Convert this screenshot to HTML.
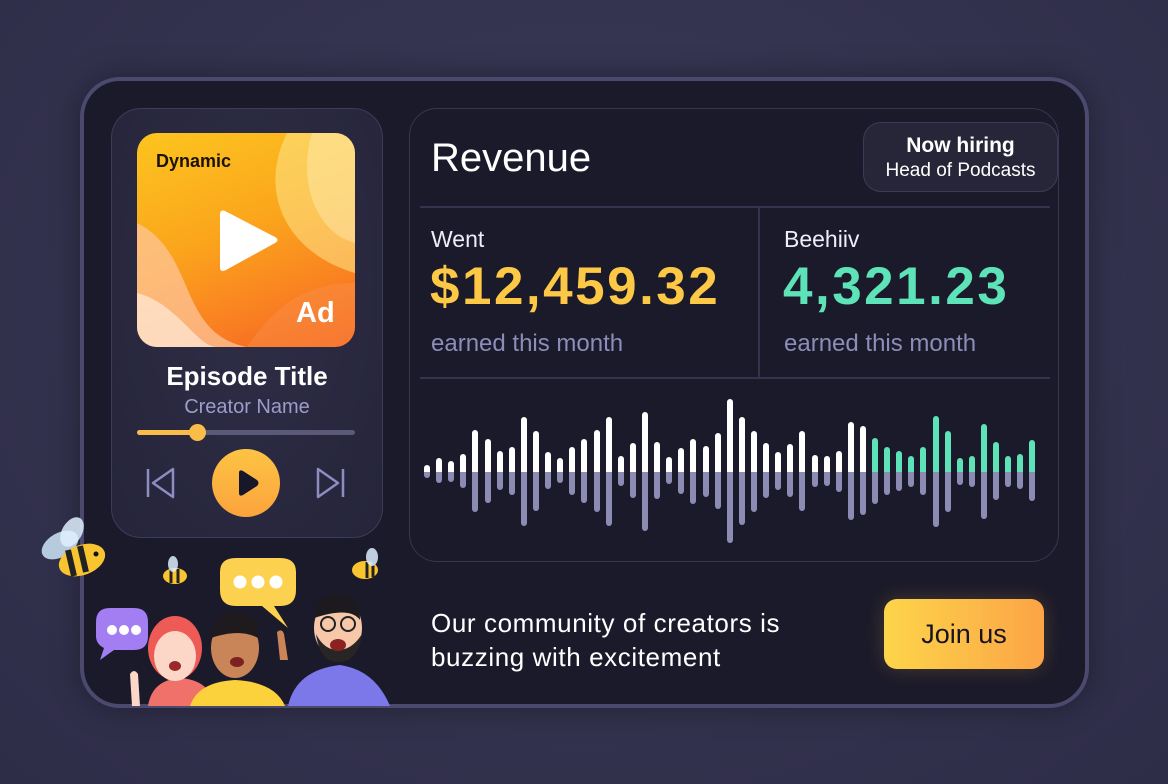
<!DOCTYPE html>
<html><head><meta charset="utf-8"><style>
*{margin:0;padding:0;box-sizing:border-box}
body{width:1168px;height:784px;overflow:hidden;background:radial-gradient(ellipse at 50% 40%,#3b3a58 0%,#33324e 60%,#2e2d48 100%);font-family:"Liberation Sans",sans-serif;position:relative}
.abs{position:absolute}
.outer{left:80px;top:77px;width:1009px;height:631px;border-radius:40px;background:#1b1a2a;border:4px solid #4b4a6e;box-shadow:0 0 30px rgba(0,0,0,.35)}
.player{left:111px;top:108px;width:272px;height:430px;border-radius:30px;background:radial-gradient(ellipse at 50% 40%,#2f2e47,#25243a);border:1.5px solid #3d3c58}
.art{left:137px;top:133px;width:218px;height:214px;border-radius:20px;overflow:hidden;background:linear-gradient(160deg,#fcc51f 0%,#fba51c 45%,#f97b22 80%,#f55a1d 100%)}
.panel{left:409px;top:108px;width:650px;height:454px;border-radius:28px;border:1.5px solid #37364f;background:#1b1a2b}
.pill{left:863px;top:122px;width:195px;height:70px;border-radius:18px;background:#272639;border:1.5px solid #3c3b55;color:#fff;text-align:center}
.t{color:#fff;white-space:nowrap}
.bars{left:424px;top:390px;width:612px;height:160px;display:flex;justify-content:space-between}
.b{position:relative;width:6px;height:160px}
.b i,.b s{position:absolute;left:0;width:6px;display:block}
.b i{top:calc(var(--t)*1px);height:calc((82px - var(--t)*1px));background:#fff;border-radius:3px 3px 0 0}
.b s{top:82px;height:calc(var(--b)*1px);background:#8c8bb3;border-radius:0 0 3px 3px}
.g i{background:#5ee3b8}
.join{left:884px;top:599px;width:160px;height:70px;border-radius:13px;background:linear-gradient(90deg,#fdd54a,#fca446);color:#15141f;font-size:27px;text-align:center;line-height:70px;box-shadow:0 0 20px rgba(252,190,70,.2)}
.num{font-size:53px;font-weight:bold;letter-spacing:2.5px;top:256px}
</style></head><body>
<div class="abs outer"></div>
<div class="abs player"></div>
<div class="abs art">
<svg width="218" height="214" style="position:absolute;left:0;top:0">
<path d="M150 0 C120 60 150 120 218 140 L218 0Z" fill="#fde68a" opacity=".55"/>
<path d="M175 0 C160 50 180 100 218 110 L218 0Z" fill="#fff2c0" opacity=".4"/>
<path d="M0 90 C60 120 40 200 110 214 L0 214Z" fill="#fdc7a0" opacity=".7"/>
<path d="M0 160 C40 170 60 214 80 214 L0 214Z" fill="#fff" opacity=".5"/>
<path d="M110 214 C140 170 170 150 218 150 L218 214Z" fill="#f98a40" opacity=".6"/>
<path d="M88 78 Q83 76 83 82 L83 134 Q83 140 89 137 L138 110 Q143 107 138 104Z" fill="#fff"/>
</svg>
<div class="abs" style="left:19px;top:18px;font-size:18px;font-weight:bold;color:#1c1206">Dynamic</div>
<div class="abs t" style="left:159px;top:164px;font-size:29px;font-weight:bold">Ad</div>
</div>
<div class="abs t" style="left:111px;width:272px;text-align:center;top:361px;font-size:26px;font-weight:bold">Episode Title</div>
<div class="abs" style="left:111px;width:272px;text-align:center;top:396px;font-size:20px;color:#9e9cc8">Creator Name</div>
<div class="abs" style="left:137px;top:430px;width:218px;height:5px;border-radius:3px;background:#5a5978"></div>
<div class="abs" style="left:137px;top:430px;width:60px;height:5px;border-radius:3px;background:#fbbd4a"></div>
<div class="abs" style="left:189px;top:424px;width:17px;height:17px;border-radius:50%;background:#fbbd4a"></div>
<svg class="abs" style="left:143px;top:466px" width="34" height="34"><path d="M5 3 V31 M30 3 L10 17 L30 31Z" stroke="#8e8cc0" stroke-width="2.5" fill="none" stroke-linejoin="round"/></svg>
<svg class="abs" style="left:314px;top:466px" width="34" height="34"><path d="M29 3 V31 M4 3 L24 17 L4 31Z" stroke="#8e8cc0" stroke-width="2.5" fill="none" stroke-linejoin="round"/></svg>
<div class="abs" style="left:212px;top:449px;width:68px;height:68px;border-radius:50%;background:linear-gradient(180deg,#fdc444,#fba33c)"></div>
<svg class="abs" style="left:212px;top:449px" width="68" height="68"><path d="M27 24 L27 44 Q27 48 31 46 L45 37 Q48 34 45 31 L31 22 Q27 20 27 24Z" fill="#18172a"/></svg>

<div class="abs panel"></div>
<div class="abs t" style="left:431px;top:136px;font-size:40px">Revenue</div>
<div class="abs pill"><div style="margin-top:11px;font-size:21px;font-weight:bold">Now hiring</div><div style="font-size:19px;margin-top:2px">Head of Podcasts</div></div>
<div class="abs" style="left:420px;top:206px;width:630px;height:1.5px;background:#35344e"></div>
<div class="abs" style="left:758px;top:207px;width:1.5px;height:170px;background:#35344e"></div>
<div class="abs" style="left:420px;top:377px;width:630px;height:1.5px;background:#35344e"></div>
<div class="abs t" style="left:431px;top:226px;font-size:23px;color:#eeeef8">Went</div>
<div class="abs num" style="left:430px;color:#fcc845">$12,459.32</div>
<div class="abs" style="left:431px;top:330px;font-size:24px;color:#8e8cb8">earned this month</div>
<div class="abs t" style="left:784px;top:226px;font-size:23px;color:#eeeef8">Beehiiv</div>
<div class="abs num" style="left:783px;color:#5ee3b8">4,321.23</div>
<div class="abs" style="left:784px;top:330px;font-size:24px;color:#8e8cb8">earned this month</div>

<div class="abs bars">
<div class="b" style="--t:75;--b:6"><i></i><s></s></div>
<div class="b" style="--t:68;--b:11"><i></i><s></s></div>
<div class="b" style="--t:71;--b:10"><i></i><s></s></div>
<div class="b" style="--t:64;--b:16"><i></i><s></s></div>
<div class="b" style="--t:40;--b:40"><i></i><s></s></div>
<div class="b" style="--t:49;--b:31"><i></i><s></s></div>
<div class="b" style="--t:61;--b:18"><i></i><s></s></div>
<div class="b" style="--t:57;--b:23"><i></i><s></s></div>
<div class="b" style="--t:27;--b:54"><i></i><s></s></div>
<div class="b" style="--t:41;--b:39"><i></i><s></s></div>
<div class="b" style="--t:62;--b:17"><i></i><s></s></div>
<div class="b" style="--t:68;--b:11"><i></i><s></s></div>
<div class="b" style="--t:57;--b:23"><i></i><s></s></div>
<div class="b" style="--t:49;--b:31"><i></i><s></s></div>
<div class="b" style="--t:40;--b:40"><i></i><s></s></div>
<div class="b" style="--t:27;--b:54"><i></i><s></s></div>
<div class="b" style="--t:66;--b:14"><i></i><s></s></div>
<div class="b" style="--t:53;--b:26"><i></i><s></s></div>
<div class="b" style="--t:22;--b:59"><i></i><s></s></div>
<div class="b" style="--t:52;--b:27"><i></i><s></s></div>
<div class="b" style="--t:67;--b:12"><i></i><s></s></div>
<div class="b" style="--t:58;--b:22"><i></i><s></s></div>
<div class="b" style="--t:49;--b:32"><i></i><s></s></div>
<div class="b" style="--t:56;--b:25"><i></i><s></s></div>
<div class="b" style="--t:43;--b:37"><i></i><s></s></div>
<div class="b" style="--t:9;--b:71"><i></i><s></s></div>
<div class="b" style="--t:27;--b:53"><i></i><s></s></div>
<div class="b" style="--t:41;--b:40"><i></i><s></s></div>
<div class="b" style="--t:53;--b:26"><i></i><s></s></div>
<div class="b" style="--t:62;--b:18"><i></i><s></s></div>
<div class="b" style="--t:54;--b:25"><i></i><s></s></div>
<div class="b" style="--t:41;--b:39"><i></i><s></s></div>
<div class="b" style="--t:65;--b:15"><i></i><s></s></div>
<div class="b" style="--t:66;--b:14"><i></i><s></s></div>
<div class="b" style="--t:61;--b:20"><i></i><s></s></div>
<div class="b" style="--t:32;--b:48"><i></i><s></s></div>
<div class="b" style="--t:36;--b:43"><i></i><s></s></div>
<div class="b g" style="--t:48;--b:32"><i></i><s></s></div>
<div class="b g" style="--t:57;--b:23"><i></i><s></s></div>
<div class="b g" style="--t:61;--b:19"><i></i><s></s></div>
<div class="b g" style="--t:66;--b:15"><i></i><s></s></div>
<div class="b g" style="--t:57;--b:23"><i></i><s></s></div>
<div class="b g" style="--t:26;--b:55"><i></i><s></s></div>
<div class="b g" style="--t:41;--b:40"><i></i><s></s></div>
<div class="b g" style="--t:68;--b:13"><i></i><s></s></div>
<div class="b g" style="--t:66;--b:15"><i></i><s></s></div>
<div class="b g" style="--t:34;--b:47"><i></i><s></s></div>
<div class="b g" style="--t:52;--b:28"><i></i><s></s></div>
<div class="b g" style="--t:66;--b:15"><i></i><s></s></div>
<div class="b g" style="--t:64;--b:17"><i></i><s></s></div>
<div class="b g" style="--t:50;--b:29"><i></i><s></s></div>
</div>

<div class="abs t" style="left:431px;top:606px;font-size:26px;line-height:34px;letter-spacing:.6px">Our community of creators is<br>buzzing with excitement</div>
<div class="abs join">Join us</div>

<svg class="abs" style="left:30px;top:510px" width="370" height="196">
<g>
<ellipse cx="30" cy="35" rx="20" ry="12" fill="#cfe6f8" opacity=".85" transform="rotate(-30 30 35)"/>
<ellipse cx="42" cy="22" rx="16" ry="10" fill="#e0f0ff" opacity=".85" transform="rotate(-60 42 22)"/>
<ellipse cx="52" cy="50" rx="24" ry="15" fill="#f8c530" transform="rotate(-20 52 50)"/>
<path d="M38 40 L44 66 M50 36 L56 62" stroke="#222" stroke-width="6"/>
<circle cx="66" cy="44" r="2.5" fill="#111"/>
</g>
<g transform="translate(145,66)"><ellipse cx="0" cy="0" rx="12" ry="8" fill="#f8c530"/><path d="M-4 -7 V7 M3 -7 V7" stroke="#222" stroke-width="3"/><ellipse cx="-2" cy="-12" rx="5" ry="8" fill="#dcefff" opacity=".85"/></g>
<g transform="translate(335,60)"><ellipse cx="0" cy="0" rx="13" ry="9" fill="#f8c530"/><path d="M2 -8 V8 M8 -7 V7" stroke="#222" stroke-width="3"/><ellipse cx="7" cy="-13" rx="6" ry="9" fill="#dcefff" opacity=".85"/></g>
<path d="M190 62 Q190 48 206 48 L250 48 Q266 48 266 62 L266 80 Q266 96 250 96 L244 96 L258 118 L232 96 L206 96 Q190 96 190 80Z" fill="#fcd14f"/>
<circle cx="210" cy="72" r="6.5" fill="#fff"/><circle cx="228" cy="72" r="6.5" fill="#fff"/><circle cx="246" cy="72" r="6.5" fill="#fff"/>
<path d="M66 112 Q66 98 80 98 L104 98 Q118 98 118 112 L118 126 Q118 140 104 140 L84 140 L70 150 L74 138 Q66 134 66 126Z" fill="#a27ef2"/>
<circle cx="82" cy="120" r="5" fill="#fff"/><circle cx="94" cy="120" r="5" fill="#fff"/><circle cx="106" cy="120" r="5" fill="#fff"/>
<path d="M118 196 Q122 170 150 168 Q180 170 185 196Z" fill="#f0716a"/>
<ellipse cx="145" cy="138" rx="27" ry="32" fill="#ee5a55"/>
<ellipse cx="145" cy="146" rx="21" ry="25" fill="#fcd6c6"/>
<ellipse cx="145" cy="156" rx="6" ry="5" fill="#9a2a2a"/>
<path d="M160 196 Q168 172 205 170 Q245 172 255 196Z" fill="#fcd23c"/>
<ellipse cx="205" cy="138" rx="24" ry="30" fill="#c98458"/>
<path d="M181 128 Q185 100 208 102 Q230 104 228 128 Q210 118 181 128Z" fill="#1e1a1e"/>
<ellipse cx="207" cy="152" rx="7" ry="5" fill="#7a2222"/>
<path d="M250 150 L247 122 Q252 118 254 124 L258 150Z" fill="#c98458"/>
<path d="M258 196 Q266 160 310 155 Q345 160 360 196Z" fill="#7c78ea"/>
<ellipse cx="308" cy="118" rx="24" ry="30" fill="#f6c7a8"/>
<path d="M284 108 Q286 82 310 84 Q330 86 330 110 Q320 96 284 108Z" fill="#1c1a1e"/>
<path d="M286 124 Q290 152 308 152 Q328 152 332 124 Q322 140 308 140 Q294 140 286 124Z" fill="#2a2525"/>
<ellipse cx="308" cy="135" rx="8" ry="6" fill="#8a2222"/>
<circle cx="298" cy="114" r="7" fill="none" stroke="#222" stroke-width="2"/><circle cx="318" cy="114" r="7" fill="none" stroke="#222" stroke-width="2"/>
<path d="M102 196 L100 164 Q104 158 108 164 L110 196Z" fill="#fcd6c6"/>
</svg>
</body></html>
